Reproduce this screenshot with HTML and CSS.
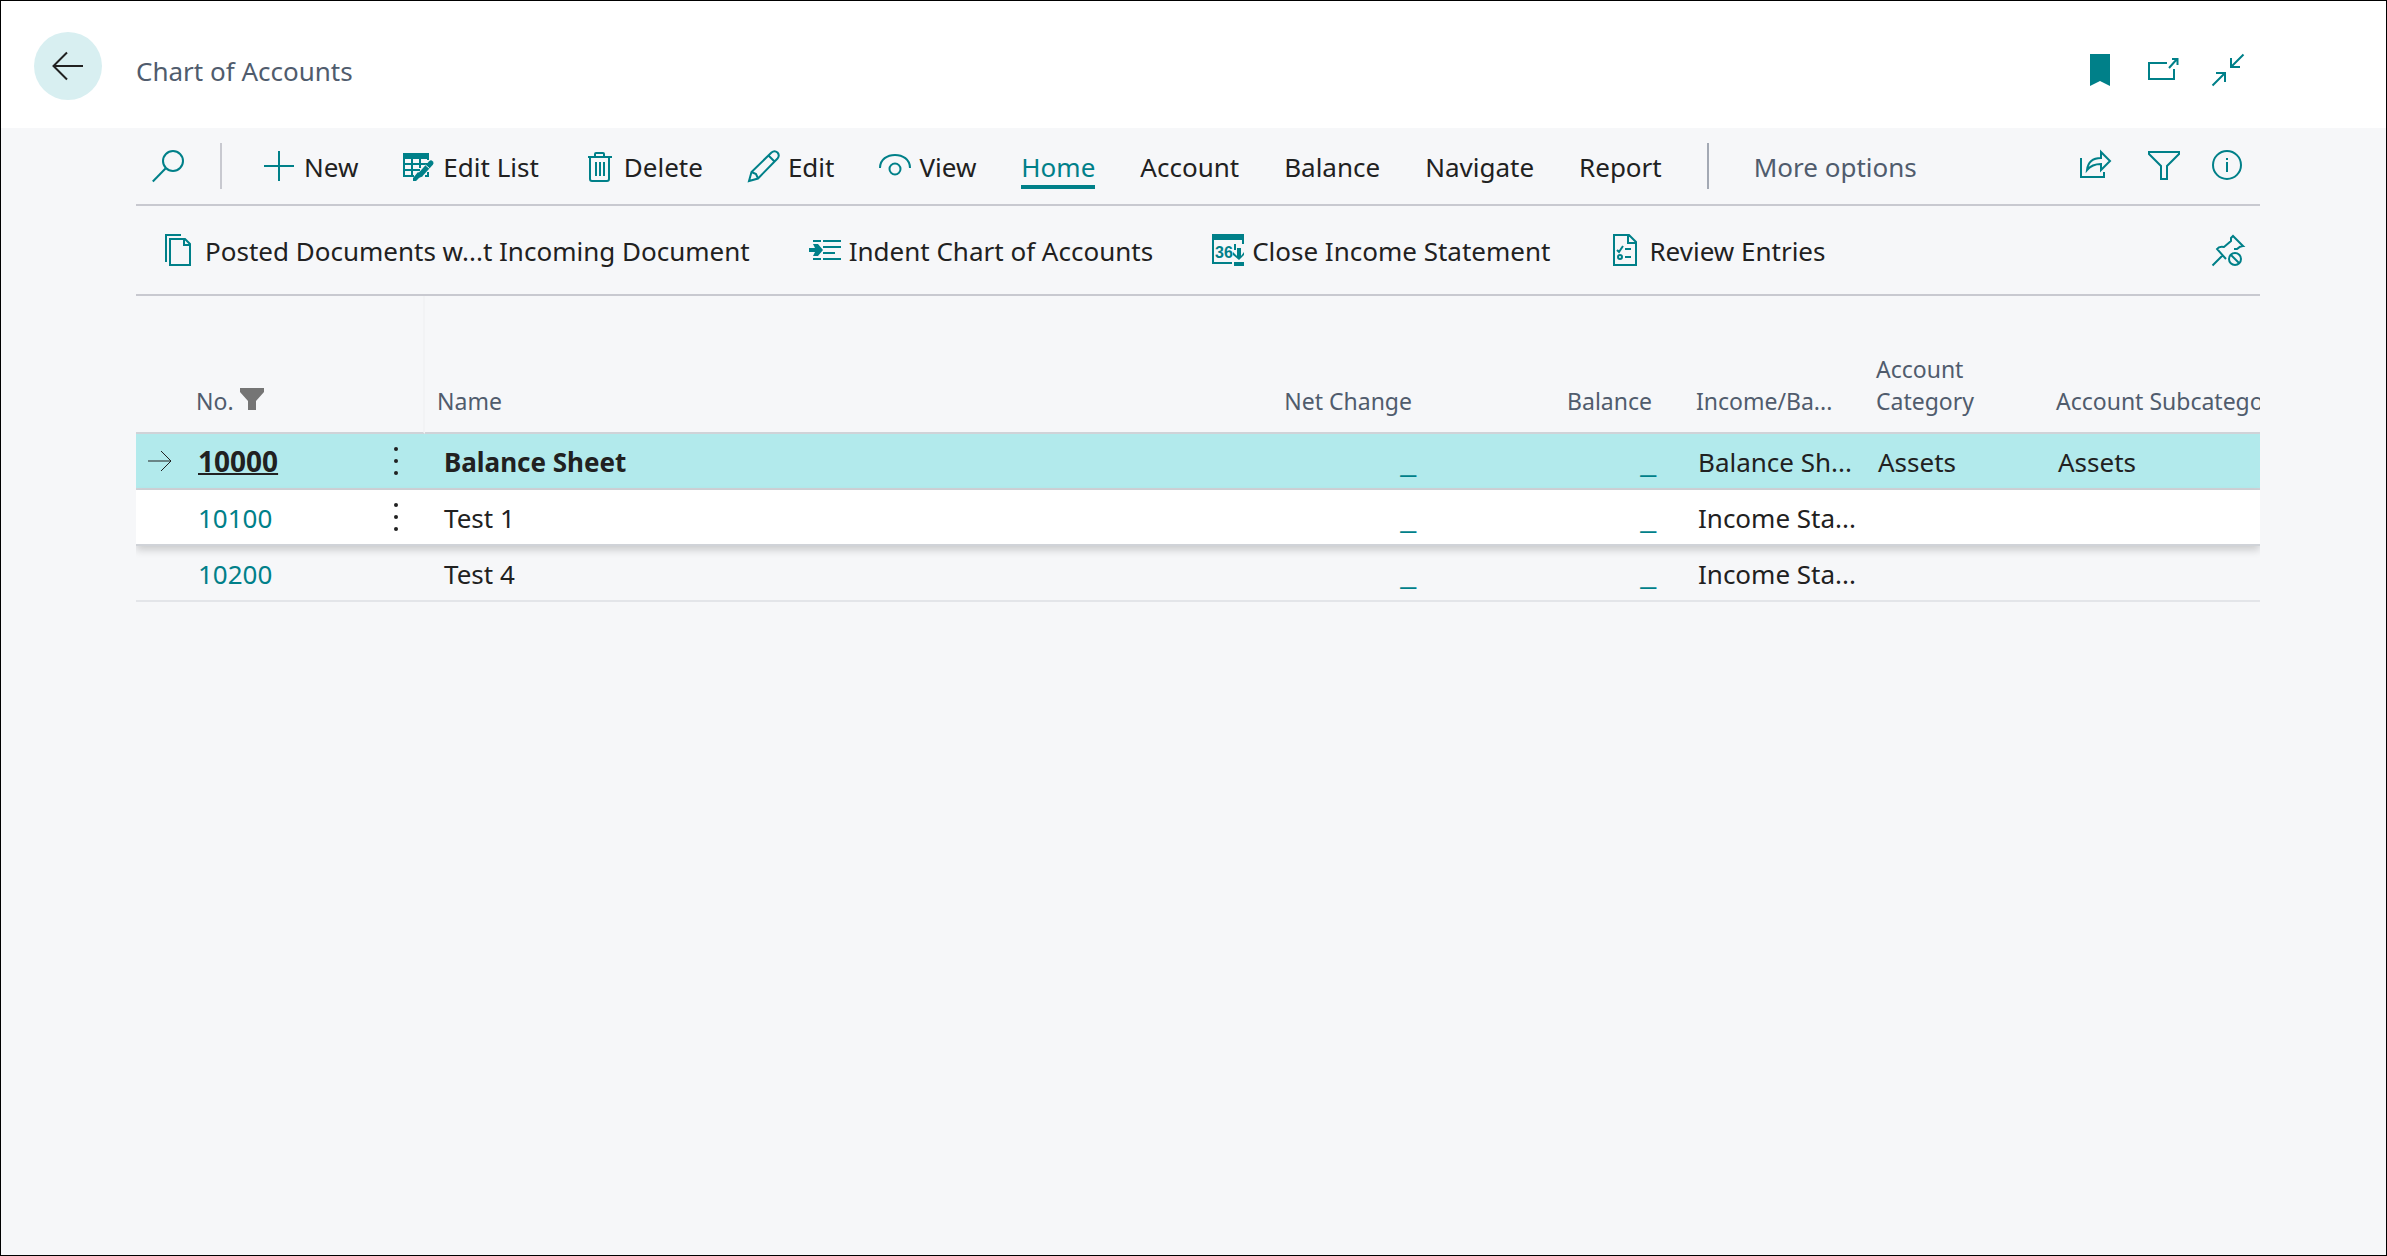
FILE: index.html
```html
<!DOCTYPE html>
<html lang="en">
<head>
<meta charset="utf-8">
<title>Chart of Accounts</title>
<link rel="stylesheet" href="styles.css">
</head>
<body>
<div class="page">
  <header class="page-header">
    <button class="back" type="button" aria-label="Back">
      <svg width="32" height="30" viewBox="0 0 32 30"><path d="M31 15H1.500M15 1.500 1.500 15 15 28.500"/></svg>
    </button>
    <h1 class="title">Chart of Accounts</h1>
    <div class="icon-group">
      <button class="icon-button" type="button" aria-label="Bookmark">
        <svg class="icon" viewBox="0 0 32 32"><path class="solid" d="M6 0H26V32L16 27 6 32Z"/></svg>
      </button>
      <button class="icon-button" type="button" aria-label="Open in new window">
        <svg class="icon" viewBox="0 0 32 32"><path d="M19 9H1V25H26V15M21 14 29 5M24 5H29.500V11"/></svg>
      </button>
      <button class="icon-button" type="button" aria-label="Collapse">
        <svg class="icon" viewBox="0 0 32 32"><path d="M31.500 .5 19 13M19 4V13H28M.5 31.500 13 19M4 19H13V28"/></svg>
      </button>
    </div>
  </header>

  <main class="content">
    <nav class="bar actions" aria-label="Actions">
      <button class="icon-button" type="button" aria-label="Search">
        <svg class="icon" viewBox="0 0 32 32"><circle cx="21" cy="11" r="10"/><path d="M13.500 18.500 .8 31.500"/></svg>
      </button>
      <span class="divider search-divider"></span>
      <div class="items">
        <button class="item" type="button"><svg class="icon" viewBox="0 0 32 32"><path d="M15 1V31M0 16H30"/></svg>New</button>
        <button class="item" type="button"><svg class="icon" viewBox="0 0 32 32"><path class="solid" d="M0 3H26V9H0Z"/><path d="M1 8V26H11M1 14H25M1 20H17M9 8V26M17 8V18M25 8V10M22 26H25V22"/><path d="M28 13 18 24" stroke-width="5" stroke-linecap="round"/><path class="solid" d="M15 22 20 26 16 28 13 31H10V28Z"/><path class="gap-line" d="M22.500 15 26.500 18.500"/></svg>Edit List</button>
        <button class="item" type="button"><svg class="icon" viewBox="0 0 32 32"><path d="M4 7H28M11 7V4Q11 3 12 3H19Q20 3 20 4V7M6 7V29Q6 31 8 31H23Q25 31 25 29V7M12 12V26M16 12V26M20 12V26"/></svg>Delete</button>
        <button class="item" type="button"><svg class="icon" viewBox="0 0 32 32"><path d="M1 31 3.500 22 23.500 2.500Q26.500 0 29.500 2.500 32 5.500 29.500 8.500L10 28.500ZM3.500 22 8 24 10 28.500M20.500 5.500 26.500 11.500"/></svg>Edit</button>
        <button class="item" type="button"><svg class="icon" viewBox="0 0 32 32"><path d="M1 18C1 .5 31 .5 31 18"/><circle cx="16" cy="19" r="5.500"/></svg>View</button>
        <button class="item active" type="button">Home</button>
        <button class="item" type="button">Account</button>
        <button class="item" type="button">Balance</button>
        <button class="item" type="button">Navigate</button>
        <button class="item" type="button">Report</button>
        <span class="divider dark"></span>
        <button class="item muted" type="button">More options</button>
      </div>
      <div class="icon-group">
        <button class="icon-button" type="button" aria-label="Share">
          <svg class="icon" viewBox="0 0 32 32"><path d="M-3 8V27H20V22M3 20C4 12 8 8 17 8V2L26 11 17 20V14Q8 14 3 20Z"/></svg>
        </button>
        <button class="icon-button" type="button" aria-label="Filter">
          <svg class="icon" viewBox="0 0 32 32"><path d="M1 2H31V4L19 16V29H13V16L1 4Z"/></svg>
        </button>
        <button class="icon-button" type="button" aria-label="Details">
          <svg class="icon" viewBox="0 0 32 32"><circle cx="15" cy="15" r="14"/><path d="M15 12V22M15 8V10"/></svg>
        </button>
      </div>
    </nav>

    <div class="bar commands">
      <button class="item" type="button"><svg class="icon" viewBox="0 0 32 32"><path d="M1 28V1H16M5 5H20L25 10V31H5ZM19 5V11H25"/></svg>Posted Documents w...t Incoming Document</button>
      <button class="item" type="button"><svg class="icon" viewBox="0 0 32 32"><path d="M4 7H12M14 7H32M14 13H32M14 19H26M4 25H12M14 25H32"/><path class="solid" d="M0 14H6L4 10H9L14 16 9 22H4L6 18H0Z"/></svg>Indent Chart of Accounts</button>
      <button class="item" type="button"><svg class="icon" viewBox="0 0 32 32"><path class="solid" d="M0 0H32V6H0ZM22 28H32V32H22ZM21 18 25 22V14H29V22L32 18V21L27 26 21 21Z"/><path d="M1 6V29H20M31 6V10M23 10V16"/><text x="3" y="24">36</text></svg>Close Income Statement</button>
      <button class="item" type="button"><svg class="icon" viewBox="0 0 32 32"><path d="M5 1H20L27 8V31H5ZM19 1V9H27M16 15H22M16 23H22M8 16 10 18 14 12"/><circle cx="11" cy="23" r="2"/></svg>Review Entries</button>
      <button class="icon-button push" type="button" aria-label="Unpin">
        <svg class="icon" viewBox="0 0 32 32"><path d="M.5 31.500 11 21M14 25 5 15Q7 12 12 13L19 7V4L21 2 31 12Q28 12 25 15H22"/><circle cx="23" cy="25" r="6"/><path d="M19 21 27 29"/></svg>
      </button>
    </div>

    <div class="table-clip">
      <table class="accounts">
        <colgroup>
          <col class="col-no"><col class="col-menu"><col><col class="col-amount"><col class="col-amount"><col class="col-type"><col class="col-type"><col class="col-sub">
        </colgroup>
        <thead>
          <tr>
            <th class="no" scope="col">No. <svg class="filter-mark" width="24" height="22" viewBox="0 0 24 22"><path d="M0 0H24V4L16 13V22H8V13L0 4Z"/></svg></th>
            <th class="menu-head"></th>
            <th scope="col">Name</th>
            <th class="amount" scope="col">Net Change</th>
            <th class="amount" scope="col">Balance</th>
            <th scope="col">Income/Ba...</th>
            <th scope="col">Account<br>Category</th>
            <th scope="col">Account Subcategory</th>
          </tr>
        </thead>
        <tbody>
          <tr class="selected">
            <td class="no"><svg class="row-arrow" width="24" height="22" viewBox="0 0 24 22"><path d="M0 11H23M13 1 23 11 13 21"/></svg><a href="#">10000</a></td>
            <td class="menu"><button type="button" aria-label="More for 10000"><svg width="6" height="30" viewBox="0 0 6 30"><circle cx="3" cy="3" r="2"/><circle cx="3" cy="15" r="2"/><circle cx="3" cy="27" r="2"/></svg></button></td>
            <td class="strong">Balance Sheet</td>
            <td class="amount"><a href="#">_</a></td>
            <td class="amount"><a href="#">_</a></td>
            <td>Balance Sh...</td>
            <td>Assets</td>
            <td>Assets</td>
          </tr>
          <tr class="hovered">
            <td class="no"><a href="#">10100</a></td>
            <td class="menu"><button type="button" aria-label="More for 10100"><svg width="6" height="30" viewBox="0 0 6 30"><circle cx="3" cy="3" r="2"/><circle cx="3" cy="15" r="2"/><circle cx="3" cy="27" r="2"/></svg></button></td>
            <td>Test 1</td>
            <td class="amount"><a href="#">_</a></td>
            <td class="amount"><a href="#">_</a></td>
            <td>Income Sta...</td>
            <td></td>
            <td></td>
          </tr>
          <tr>
            <td class="no"><a href="#">10200</a></td>
            <td class="menu"></td>
            <td>Test 4</td>
            <td class="amount"><a href="#">_</a></td>
            <td class="amount"><a href="#">_</a></td>
            <td>Income Sta...</td>
            <td></td>
            <td></td>
          </tr>
        </tbody>
      </table>
    </div>
  </main>
</div>
</body>
</html>
```
FILE: styles.css
```css
:root {
  --teal: #008089;
  --text: #212121;
  --muted: #505c6d;
  --line: #c8c9d0;
  --canvas: #f6f7f9;
}

* { box-sizing: border-box; }

body {
  margin: 0;
  font-family: "Noto Sans", "Open Sans", sans-serif;
  font-size: 26px;
  line-height: 36px;
  color: var(--text);
}

button {
  margin: 0;
  padding: 0;
  border: 0;
  background: none;
  font: inherit;
  color: inherit;
  cursor: pointer;
}

a { color: var(--teal); text-decoration: none; }
svg { display: block; flex: none; overflow: visible; }

.page {
  min-height: 100vh;
  border: 1px solid #000;
  background: var(--canvas);
}

.page-header {
  display: flex;
  align-items: center;
  height: 127px;
  padding: 0 142px 0 33px;
  background: #fff;
}

.back {
  display: grid;
  place-items: center;
  width: 68px;
  height: 68px;
  margin-top: 3px;
  border-radius: 50%;
  background: #d8eff1;
}
.back svg { fill: none; stroke: var(--text); stroke-width: 2; }

.title {
  margin: 12px 0 0 34px;
  font-size: 26px;
  font-weight: 400;
  color: var(--muted);
}

.icon-group { display: flex; gap: 32px; margin-left: auto; }
.page-header .icon-group { padding-top: 10px; }
.icon { width: 32px; height: 32px; fill: none; stroke: var(--teal); stroke-width: 2; }
.icon .solid, .icon text { fill: var(--teal); stroke: none; }
.icon .gap-line { stroke: var(--canvas); stroke-width: 1; }
.icon text { font: bold 16px "Liberation Sans", sans-serif; }

.content { margin: 0 126px 0 135px; }

.bar {
  display: flex;
  align-items: center;
  border-bottom: 2px solid var(--line);
}
.actions { height: 78px; padding: 0 16px; }
.commands { height: 90px; padding: 0 16px 0 29px; gap: 59px; }

.items { display: flex; align-items: center; gap: 45px; margin-left: 42px; }
.item { display: flex; align-items: center; gap: 8px; padding-top: 2px; white-space: nowrap; }
.item .icon { margin-top: -2px; }
.item.muted { color: var(--muted); }
.item.active { color: var(--teal); box-shadow: 0 4px var(--teal); }
.divider { width: 2px; height: 46px; background: var(--line); }
.divider.dark { background: #a3a9b4; }
.search-divider { margin-left: 36px; }
.push { margin-left: auto; }

.table-clip { overflow: hidden; }

.accounts {
  width: 100%;
  table-layout: fixed;
  border-collapse: separate;
  border-spacing: 0;
}
.col-no { width: 230px; }
.col-menu { width: 59px; }
.col-amount { width: 240px; }
.col-type { width: 180px; }
.col-sub { width: 216px; }

th {
  height: 138px;
  padding: 0 0 15px 12px;
  border-bottom: 2px solid #d0d3d8;
  font-size: 23px;
  font-weight: 400;
  line-height: 32px;
  text-align: left;
  vertical-align: bottom;
  white-space: nowrap;
  color: var(--muted);
}
td {
  height: 56px;
  padding: 1px 0 0 19px;
  border-bottom: 2px solid #e3e5e9;
  white-space: nowrap;
}
td:nth-child(n+6) { padding-left: 14px; }
th.no { padding-left: 60px; }
td.no { padding-left: 62px; }
th.menu-head { border-right: 2px solid #f2f3f5; }
th.amount { padding-right: 32px; text-align: right; }
td.amount { padding-right: 28px; text-align: right; font-family: "Liberation Sans", sans-serif; font-size: 28px; }

.filter-mark { display: inline-block; fill: #757575; }
.row-arrow { float: left; margin: 7px 0 0 -50px; fill: none; stroke: var(--text); stroke-width: 1; }
td.menu { padding: 0; }
.menu button { display: grid; place-items: center; width: 100%; height: 54px; }
.menu svg { fill: var(--text); }
.strong { font-weight: 700; }

.selected td { border-bottom-color: #d0d3d8; background: #b2eaec; }
.selected .no a {
  font-size: 28px;
  font-weight: 700;
  color: var(--text);
  text-decoration: underline;
  text-decoration-thickness: 2px;
}
.hovered { position: relative; box-shadow: 0 4px 8px rgba(0, 0, 0, 0.18); }
.hovered td { border-bottom-color: #d0d3d8; background: #fff; }
```
